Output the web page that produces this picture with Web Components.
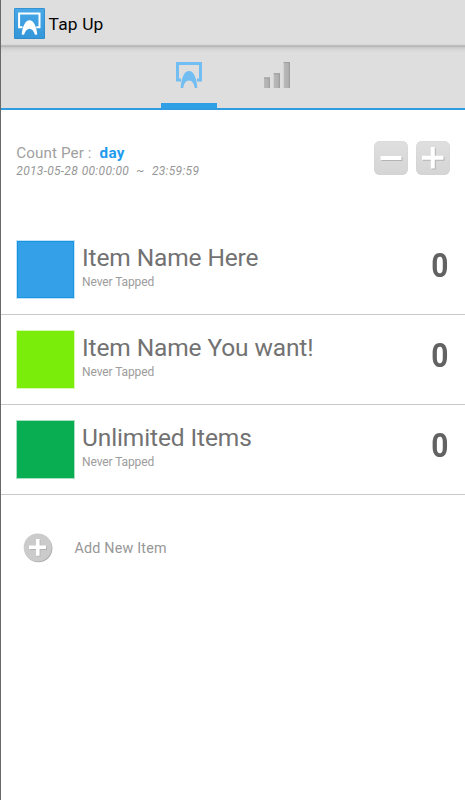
<!DOCTYPE html>
<html lang="en">
<head>
<meta charset="utf-8">
<title>Tap Up</title>
<style>
html, body { margin: 0; height: 100%; }
body { font-family: Roboto, "Liberation Sans", sans-serif; background: #fff; overflow: hidden; }
</style>
</head>
<body>
<tap-app></tap-app>
<script>
function define(name, html) {
  const t = document.createElement('template');
  t.innerHTML = html;
  customElements.define(name, class extends HTMLElement {
    constructor() {
      super();
      this.attachShadow({ mode: 'open' }).append(t.content.cloneNode(true));
    }
  });
}

define('app-header', `
<style>
:host { display: flex; align-items: center; box-sizing: border-box; height: 47px; padding: 0 0 0 12.6px;
  background: linear-gradient(#dedede, #dedede 44px, #d0d0d0 45px, #b2b0b2 46px, #bcbabc); }
svg { display: block; margin-top: -1px; }
h1 { margin: 0 0 0 4px; font-size: 17.4px; line-height: 46px; font-weight: 400; color: #050505; white-space: nowrap; letter-spacing: .15px; }
</style>
<svg width="31" height="31" viewBox="0 0 31 31">
  <defs><linearGradient id="g" x2="0" y2="1"><stop stop-color="#48a8e8"/><stop offset="1" stop-color="#3396d8"/></linearGradient></defs>
  <rect width="31" height="31" rx="1" fill="url(#g)"/>
  <rect x=".5" y=".5" width="30" height="30" rx="1" fill="none" stroke="#2b83c2" stroke-opacity=".6"/>
  <path d="M8.5 19.2H5.1V5.5H25.5V19.2H22.3" fill="none" stroke="#fff" stroke-width="2"/>
  <path d="M7.7 26.5C8.5 18 11.5 12.3 15.5 12.3S22.5 18 23.3 26.5L21 26.8C19.8 22.8 17.8 20.8 15.5 20.8S11.2 22.8 10 26.8Z" fill="#fff"/>
</svg>
<h1><slot></slot></h1>`);

define('tab-bar', `
<style>
:host { display: flex; box-sizing: border-box; height: 63px; padding-left: 144px; border-bottom: 2px solid #2f9ce0;
  background: linear-gradient(#c9c8c9, #d8d8d8 3px, #dedede 6px); }
</style>
<slot></slot>`);

define('nav-tab', `
<style>
:host { display: flex; flex-direction: column; width: 88px; height: 61px; align-items: center; }
.icon { flex: 1; padding-top: 15px; box-sizing: border-box; }
.bar { width: 56px; height: 5px; }
:host([selected]) .bar { background: #2f9fe6; }
</style>
<div class="icon"><slot></slot></div><div class="bar"></div>`);

define('tap-icon', `
<style>:host, svg { display: block; }</style>
<svg width="26" height="26" viewBox="0 0 26 26">
  <path d="M5 18H1.5V1.5H24.5V18H21" fill="none" stroke="#72bdf1" stroke-width="3"/>
  <path d="M4.7 26C5.3 16.5 8 9 13 9S20.7 16.5 21.3 26H18.8C18 21.2 16 18.5 13 18.5S8 21.2 7.2 26Z" fill="#72bdf1"/>
</svg>`);

define('chart-icon', `
<style>:host, svg { display: block; }</style>
<svg width="26" height="26" viewBox="0 0 26 26">
  <defs><linearGradient id="g"><stop stop-color="#b9b9b9"/><stop offset=".7" stop-color="#b1b1b1"/><stop offset="1" stop-color="#999"/></linearGradient></defs>
  <path d="M0 15.5H6V26H0Z" fill="url(#g)"/><path d="M9.7 11.3H16V26H9.7Z" fill="url(#g)"/><path d="M19.7 0H26V26H19.7Z" fill="url(#g)"/>
  <path d="M0 16H6M9.7 11.8H16M19.7 .5H26" stroke="#9d9d9d"/>
</svg>`);

define('count-period', `
<style>
:host { display: flex; justify-content: space-between; align-items: flex-start; box-sizing: border-box; height: 115px; padding: 31px 15px 0 15.3px; }
.label { margin-top: 1.6px; font-size: 15.2px; line-height: 20px; color: #a0a0a0; white-space: pre; }
b { color: #1e9bee; font-weight: 700; margin-left: 8px; letter-spacing: .35px; }
.label span { letter-spacing: .1px; }
.range { font-size: 12px; line-height: 16px; font-style: italic; color: #979797; white-space: pre; letter-spacing: .3px; word-spacing: .4px; }
.buttons { display: flex; gap: 8px; }
</style>
<div><div class="label"><span>Count Per :</span><b><slot name="unit"></slot></b></div><div class="range"><slot name="range"></slot></div></div>
<div class="buttons"><slot></slot></div>`);

define('step-button', `
<style>
:host { display: block; width: 34px; height: 34px; }
svg { display: block; filter: drop-shadow(1px 1px .6px #b4b4b4); }
.box { width: 34px; height: 34px; border-radius: 6px; background: linear-gradient(#dfdfdf, #d5d5d5); box-shadow: inset 0 0 1px 0 #c4c4c4; }
.v { display: none; }
:host([plus]) .v { display: inline; }
:host([plus]) .m { display: none; }
</style>
<div class="box"><svg width="34" height="34"><path class="m" d="M6.5 17H27.5" stroke="#fff" stroke-width="4"/><path class="v" d="M6 16.8H27.5M16.8 6V27.5" stroke="#fff" stroke-width="4"/></svg></div>`);

define('item-row', `
<style>
:host { display: flex; box-sizing: border-box; height: 90px; padding: 15px 16px 0 15px; border-bottom: 1px solid #c9c9c9; }
.swatch { width: 57px; height: 57px; margin: 1px 0 0 1px; box-sizing: border-box; background: var(--swatch); border: 1px solid var(--edge, var(--swatch)); box-shadow: 0 0 0 1px var(--halo); }
.text { flex: 1; padding-left: 8px; white-space: nowrap; }
.name { font-size: 24.5px; line-height: 30px; margin-top: 3px; color: #727272; letter-spacing: -.12px; }
.sub { font-size: 12px; line-height: 16px; margin-top: 1px; color: #9c9c9c; letter-spacing: -.1px; }
.count { font-size: 34px; line-height: 40px; margin-top: 5px; font-weight: 700; color: #626262; transform: scaleX(.88); transform-origin: right; }
</style>
<div class="swatch"></div>
<div class="text"><div class="name"><slot></slot></div><div class="sub"><slot name="status"></slot></div></div>
<div class="count"><slot name="count"></slot></div>`);

define('add-item', `
<style>
:host { display: flex; align-items: center; padding: 38px 0 0 21.5px; font-size: 14.3px; line-height: 30px; color: #979797; }
svg { display: block; margin-right: 22px; }
span { letter-spacing: .2px; white-space: nowrap; }
</style>
<svg width="30" height="30" viewBox="0 0 30 30">
  <circle cx="15.4" cy="15.3" r="14" fill="#aaa"/><circle cx="14.7" cy="14.5" r="14" fill="#cbcbcb"/>
  <path d="M7 15.3H24M15.6 7V23.5" stroke="#b2b2b2" stroke-width="3.6"/>
  <path d="M6 14.3H23M14.8 6V22.7" stroke="#fff" stroke-width="3.6"/>
</svg><span><slot></slot></span>`);

define('tap-app', `
<style>
:host { display: block; box-sizing: border-box; width: 465px; height: 800px; border-left: 1px solid #69696c; background: #fff; }
</style>
<app-header>Tap Up</app-header>
<tab-bar><nav-tab selected><tap-icon></tap-icon></nav-tab><nav-tab><chart-icon></chart-icon></nav-tab></tab-bar>
<count-period><span slot="unit">day</span><span slot="range">2013-05-28 00:00:00  ~  23:59:59</span>
<step-button></step-button><step-button plus></step-button></count-period>
<item-row style="--swatch:#33a0e8;--edge:#1695e3;--halo:#c5e3f8">Item Name Here<span slot="status">Never Tapped</span><span slot="count">0</span></item-row>
<item-row style="--swatch:#7bed0a;--halo:#d6f8b4">Item Name You want!<span slot="status">Never Tapped</span><span slot="count">0</span></item-row>
<item-row style="--swatch:#09ae52;--halo:#a8dfc0">Unlimited Items<span slot="status">Never Tapped</span><span slot="count">0</span></item-row>
<add-item>Add New Item</add-item>`);
</script>
</body>
</html>
